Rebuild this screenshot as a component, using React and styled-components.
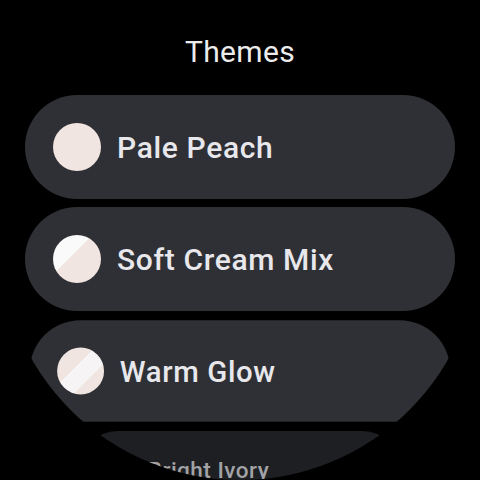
import styled, { createGlobalStyle } from "styled-components"

const GlobalStyle = createGlobalStyle`
body {
  margin: 0;
  background: #000;
  font-family: Roboto, "Liberation Sans", sans-serif;
}
`

const Screen = styled.div`
width: 480px;
height: 480px;
border-radius: 50%;
overflow: hidden;
background: #000;
display: flex;
flex-direction: column;
align-items: center;
`

const Title = styled.h1`
margin: 34px 0 0 0;
font-size: 30px;
line-height: 36px;
font-weight: 400;
letter-spacing: 0.3px;
color: #ececec;
`

const List = styled.div`
width: 100%;
box-sizing: border-box;
padding: 0 25px;
margin-top: 25px;
display: flex;
flex-direction: column;
gap: 8px;
`

const Chip = styled.div`
flex-shrink: 0;
height: 104px;
border-radius: 52px;
background: ${p => p.$bg || "#2f3035"};
display: flex;
align-items: center;
gap: 16px;
padding-left: 28px;
transform: scale(${p => p.$scale || 1});
transform-origin: ${p => p.$origin || "center"};
`

const Swatch = styled.span`
width: 48px;
height: 48px;
border-radius: 50%;
flex-shrink: 0;
background: ${p => p.$fill};
`

const Label = styled.span`
font-size: 30px;
font-weight: 500;
letter-spacing: 0.65px;
color: ${p => p.$color || "#e8e8ec"};
`

const peach = "#f1e5e1"
const white = "#fbfafa"

const themes = [
  { name: "Pale Peach", fill: peach },
  { name: "Soft Cream Mix", fill: `linear-gradient(135deg, ${white} 0 41%, ${peach} 41% 100%)` },
  { name: "Warm Glow", fill: `linear-gradient(135deg, ${peach} 0 40%, #f6f4f4 40% 67%, ${peach} 67% 100%)`, scale: 0.978 },
  { name: "Bright Ivory", fill: "#9a9690", scale: 0.75, origin: "top center", bg: "#1e1f22", color: "#a2a3a6" },
]

const App = () => {
  return (
    <>
      <GlobalStyle />
      <Screen>
        <Title>Themes</Title>
        <List>
          {themes.map(t => (
            <Chip key={t.name} $scale={t.scale} $origin={t.origin} $bg={t.bg}>
              <Swatch $fill={t.fill} />
              <Label $color={t.color}>{t.name}</Label>
            </Chip>
          ))}
        </List>
      </Screen>
    </>
  )
}

export default App
